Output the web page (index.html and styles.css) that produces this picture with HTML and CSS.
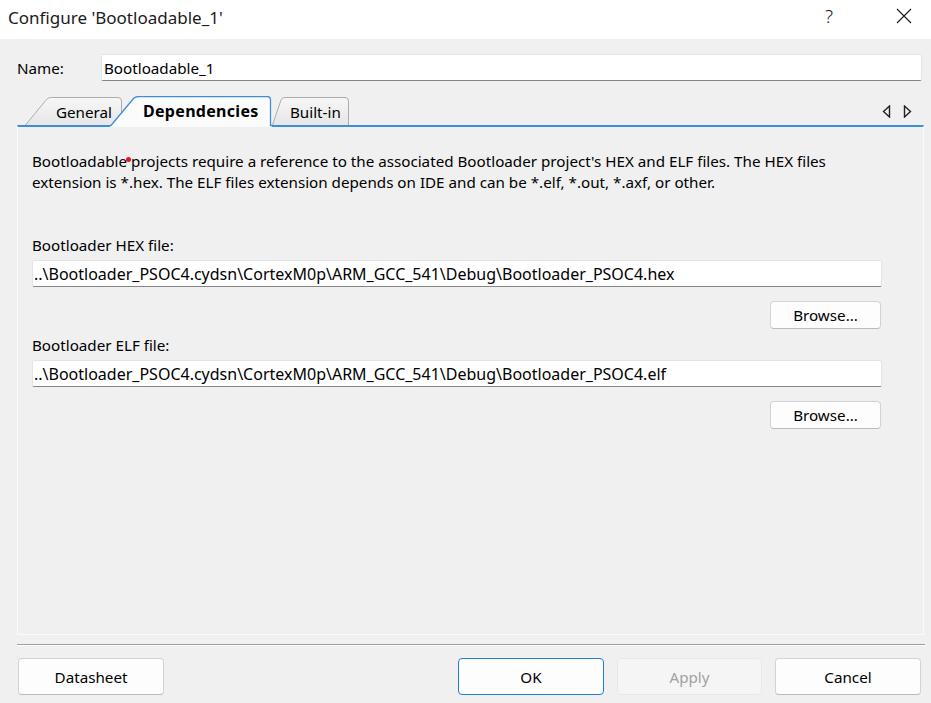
FILE: index.html
```html
<!DOCTYPE html>
<html lang="en">
<head>
<meta charset="utf-8">
<title>Configure 'Bootloadable_1'</title>
<link rel="stylesheet" href="styles.css">
</head>
<body>
<div class="window">
  <header class="titlebar">
    <span class="title">Configure 'Bootloadable_1'</span>
    <span class="tb-help">?</span>
    <span class="tb-close">
      <svg width="16" height="16" viewBox="0 0 16 16"><path d="M1 1 L15 15 M15 1 L1 15" stroke="#1a1a1a" stroke-width="1.1" fill="none"/></svg>
    </span>
  </header>
  <main class="content">
    <div class="name-row">
      <span class="name-label">Name:</span>
      <div class="field name-field">Bootloadable_1</div>
    </div>
    <div class="tabs">
      <div class="tab tab-general">
        <svg class="tab-shape" width="98" height="28" viewBox="0 0 98 28">
          <defs><linearGradient id="g1" x1="0" y1="0" x2="0" y2="1"><stop offset="0" stop-color="#f7f7f7"/><stop offset="1" stop-color="#e6e6e6"/></linearGradient></defs>
          <path d="M0.5 28 L21.5 2.5 Q23.5 0.5 26.5 0.5 L93 0.5 Q96.5 0.5 96.5 4 L96.5 28" fill="url(#g1)" stroke="#acacac"/>
        </svg>
        <span class="tab-text">General</span>
      </div>
      <div class="tab tab-active">
        <svg class="tab-shape" width="162" height="31" viewBox="0 0 162 31">
          <path d="M0 31 L0 29 L1 29 L23.5 2.5 Q25.5 0.5 28.5 0.5 L157 0.5 Q160.5 0.5 160.5 4 L160.5 29 L162 29 L162 31 Z" fill="#fbfbfb" stroke="none"/>
          <path d="M0 29.5 L1 29.5 L23.5 2.5 Q25.5 0.5 28.5 0.5 L157 0.5 Q160.5 0.5 160.5 4 L160.5 29.5 L162 29.5" fill="none" stroke="#3f8edb" stroke-width="1.3"/>
        </svg>
        <span class="tab-text">Dependencies</span>
      </div>
      <div class="tab tab-builtin">
        <svg class="tab-shape" width="78" height="28" viewBox="0 0 78 28">
          <defs><linearGradient id="g3" x1="0" y1="0" x2="0" y2="1"><stop offset="0" stop-color="#f7f7f7"/><stop offset="1" stop-color="#e6e6e6"/></linearGradient></defs>
          <path d="M0.5 28 L9 3 Q10 0.5 13 0.5 L73 0.5 Q76.5 0.5 76.5 4 L76.5 28" fill="url(#g3)" stroke="#acacac"/>
        </svg>
        <span class="tab-text">Built-in</span>
      </div>
      <div class="tab-arrows">
        <svg width="9" height="13" viewBox="0 0 9 13"><path d="M7.5 1 L1.5 6.5 L7.5 12 Z" fill="none" stroke="#222" stroke-width="1.4" stroke-linejoin="miter"/></svg>
        <svg width="9" height="13" viewBox="0 0 9 13"><path d="M1.5 1 L7.5 6.5 L1.5 12 Z" fill="none" stroke="#222" stroke-width="1.4" stroke-linejoin="miter"/></svg>
      </div>
    </div>
    <section class="panel">
      <p class="desc">Bootloadable<span class="red-dot"></span> projects require a reference to the associated Bootloader project's HEX and ELF files. The HEX files<br>extension is *.hex. The ELF files extension depends on IDE and can be *.elf, *.out, *.axf, or other.</p>
      <div class="file-group group-hex">
        <div class="file-label">Bootloader HEX file:</div>
        <div class="field path-field">..\Bootloader_PSOC4.cydsn\CortexM0p\ARM_GCC_541\Debug\Bootloader_PSOC4.hex</div>
        <div class="browse-row"><button class="btn btn-browse">Browse...</button></div>
      </div>
      <div class="file-group group-elf">
        <div class="file-label">Bootloader ELF file:</div>
        <div class="field path-field">..\Bootloader_PSOC4.cydsn\CortexM0p\ARM_GCC_541\Debug\Bootloader_PSOC4.elf</div>
        <div class="browse-row"><button class="btn btn-browse">Browse...</button></div>
      </div>
    </section>
    <div class="separator"></div>
    <footer class="buttons">
      <button class="btn btn-dialog btn-datasheet">Datasheet</button>
      <div class="spacer"></div>
      <button class="btn btn-dialog btn-ok">OK</button>
      <button class="btn btn-dialog btn-disabled">Apply</button>
      <button class="btn btn-dialog">Cancel</button>
    </footer>
  </main>
</div>
</body>
</html>
```
FILE: styles.css
```css
* { box-sizing: border-box; }
html, body { margin: 0; padding: 0; }
body {
  width: 931px;
  height: 703px;
  overflow: hidden;
  background: #f0f0f0;
  font-family: "Noto Sans", "DejaVu Sans", sans-serif;
  font-size: 15.2px;
  color: #000;
}
.window { width: 931px; height: 703px; display: flex; flex-direction: column; }

.titlebar {
  height: 39px;
  background: #ffffff;
  display: flex;
  align-items: center;
  padding-left: 8px;
}
.title { font-size: 17px; color: #1a1a1a; flex: 1; margin-top: -5px; }
.tb-help { font-size: 19px; color: #1a1a1a; width: 20px; margin-right: 51px; font-weight: 300; margin-top: -7px; }
.tb-close { width: 16px; height: 16px; margin-right: 19px; margin-top: -8px; display: flex; }

.content {
  flex: 1;
  display: flex;
  flex-direction: column;
  padding: 15px 7px 0 17px;
}

.field {
  background: #ffffff;
  height: 27px;
  border: 1px solid #e4e4e4;
  border-bottom: 1px solid #868686;
  border-radius: 2px;
  display: flex;
  align-items: center;
  padding-left: 2px;
  white-space: nowrap;
}

.name-row { display: flex; align-items: center; height: 27px; margin-right: 2px; }
.name-label { width: 84px; }
.name-field { flex: 1; }

.tabs {
  display: flex;
  align-items: flex-end;
  height: 29px;
  margin-top: 15px;
  position: relative;
  z-index: 2;
}
.tab { position: relative; height: 28px; display: flex; align-items: center; }
.tab-shape { position: absolute; left: 0; top: 0; }
.tab-text { position: relative; margin-top: 2px; }
.tab-general { width: 98px; margin-left: 8px; padding-left: 31px; }
.tab-active { width: 162px; height: 31px; margin-left: -13px; margin-bottom: -2px; padding-left: 33px; z-index: 3; }
.tab-active .tab-text { font-weight: 700; margin-top: -1px; font-size: 16px; letter-spacing: 0.3px; }
.tab-builtin { width: 78px; margin-left: 0px; padding-left: 18px; }
.tab-arrows {
  margin-left: auto;
  margin-right: 12px;
  align-self: center;
  display: flex;
  gap: 12px;
  margin-top: 1px;
}

.panel {
  height: 510px;
  border: 1px solid #fbfbfb;
  border-top: 2px solid #3f8edb;
  padding: 24px 41px 0 14px;
  position: relative;
  z-index: 1;
}
.desc { margin: 0; line-height: 21px; white-space: nowrap; }
.red-dot {
  display: inline-block;
  width: 5px;
  height: 5px;
  border-radius: 50%;
  background: #e8141b;
  vertical-align: 5px;
  margin: 0 -4px 0 -1px;
}
.file-group { display: flex; flex-direction: column; }
.group-hex { margin-top: 42px; }
.group-elf { margin-top: 6px; }
.file-label { line-height: 20px; margin-bottom: 5px; }
.path-field { padding-left: 1px; font-size: 16px; }
.browse-row { display: flex; justify-content: flex-end; margin-top: 14px; }

.btn {
  font-family: inherit;
  font-size: 15.2px;
  color: #000;
  background: #fdfdfd;
  border: 1px solid #d3d3d3;
  border-bottom-color: #bcbcbc;
  border-radius: 4px;
  padding: 0;
}
.btn-browse { width: 111px; height: 28px; margin-right: 1px; }

.separator {
  margin-top: 9px;
  height: 2px;
  border-top: 1px solid #a0a0a0;
  border-bottom: 1px solid #ffffff;
  margin-right: -1px;
}
.buttons { display: flex; margin-top: 12px; height: 37px; gap: 13px; padding-right: 3px; }
.spacer { flex: 1; }
.btn-dialog { width: 146px; height: 37px; }
.btn-datasheet { margin-left: 1px; }
.btn-ok { border: 1px solid #1f7fd6; }
.btn-disabled { background: #f5f5f5; border-color: #e8e8e8; color: #a2a2a2; width: 145px; }
```
